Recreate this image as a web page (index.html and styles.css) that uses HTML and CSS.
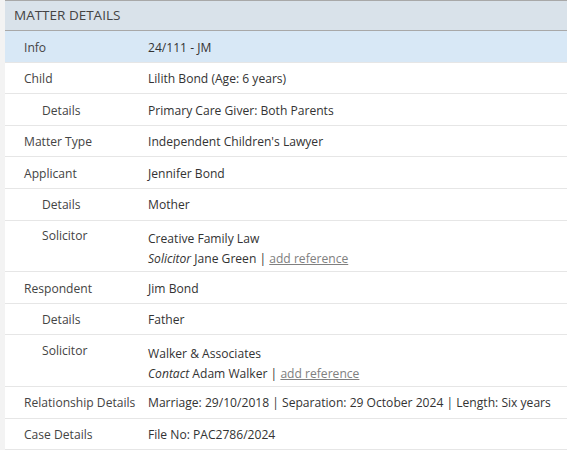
FILE: index.html
```html
<!DOCTYPE html>
<html>
<head>
<meta charset="utf-8">
<link rel="stylesheet" href="styles.css">
</head>
<body>
<div class="panel">
  <div class="panel-header">MATTER DETAILS</div>
  <div class="rows">
    <div class="row row-active"><div class="label">Info</div><div class="value">24/111 - JM</div></div>
    <div class="row"><div class="label">Child</div><div class="value">Lilith Bond (Age: 6 years)</div></div>
    <div class="row"><div class="label sub">Details</div><div class="value">Primary Care Giver: Both Parents</div></div>
    <div class="row"><div class="label">Matter Type</div><div class="value">Independent Children's Lawyer</div></div>
    <div class="row"><div class="label">Applicant</div><div class="value">Jennifer Bond</div></div>
    <div class="row"><div class="label sub">Details</div><div class="value">Mother</div></div>
    <div class="row row-multi"><div class="label sub">Solicitor</div><div class="value"><div>Creative Family Law</div><div><em>Solicitor</em> Jane Green | <a class="ref" href="#">add reference</a></div></div></div>
    <div class="row"><div class="label">Respondent</div><div class="value">Jim Bond</div></div>
    <div class="row"><div class="label sub">Details</div><div class="value">Father</div></div>
    <div class="row row-multi"><div class="label sub">Solicitor</div><div class="value"><div>Walker &amp; Associates</div><div><em>Contact</em> Adam Walker | <a class="ref" href="#">add reference</a></div></div></div>
    <div class="row"><div class="label">Relationship Details</div><div class="value">Marriage: 29/10/2018 | Separation: 29 October 2024 | Length: Six years</div></div>
    <div class="row"><div class="label">Case Details</div><div class="value">File No: PAC2786/2024</div></div>
  </div>
</div>
</body>
</html>
```
FILE: styles.css
```css
html, body {
  margin: 0;
  padding: 0;
  background: #f3f3f3;
}
body {
  font-family: "Open Sans", "Noto Sans", sans-serif;
  font-size: 12.1px;
  color: #333;
}
.panel {
  margin-left: 5px;
  background: #fff;
  border-top: 1px solid #a8a8a8;
  height: 449px;
  overflow: hidden;
}
.panel-header {
  background: #d9e2ea;
  height: 29px;
  line-height: 29px;
  padding-left: 9px;
  font-size: 13.5px;
  color: #444;
  border-bottom: 1px solid #a8a8a8;
}
.row {
  display: grid;
  grid-template-columns: 143px 1fr;
  padding: 6.5px 0 4.1px;
  line-height: 20px;
  border-bottom: 1px solid #e6e6e6;
}
.row-active {
  background: #d8e8f6;
}
.row-multi {
  padding-bottom: 2.1px;
}
.row-multi .label {
  margin-top: -1px;
}
.row-multi .value {
  padding-top: 2px;
}
.label {
  padding-left: 19px;
  color: #444;
}
.label.sub {
  padding-left: 37px;
}
.value {
  color: #333;
}
.ref {
  color: #808080;
  text-decoration: underline;
}
em {
  font-style: italic;
}
```
